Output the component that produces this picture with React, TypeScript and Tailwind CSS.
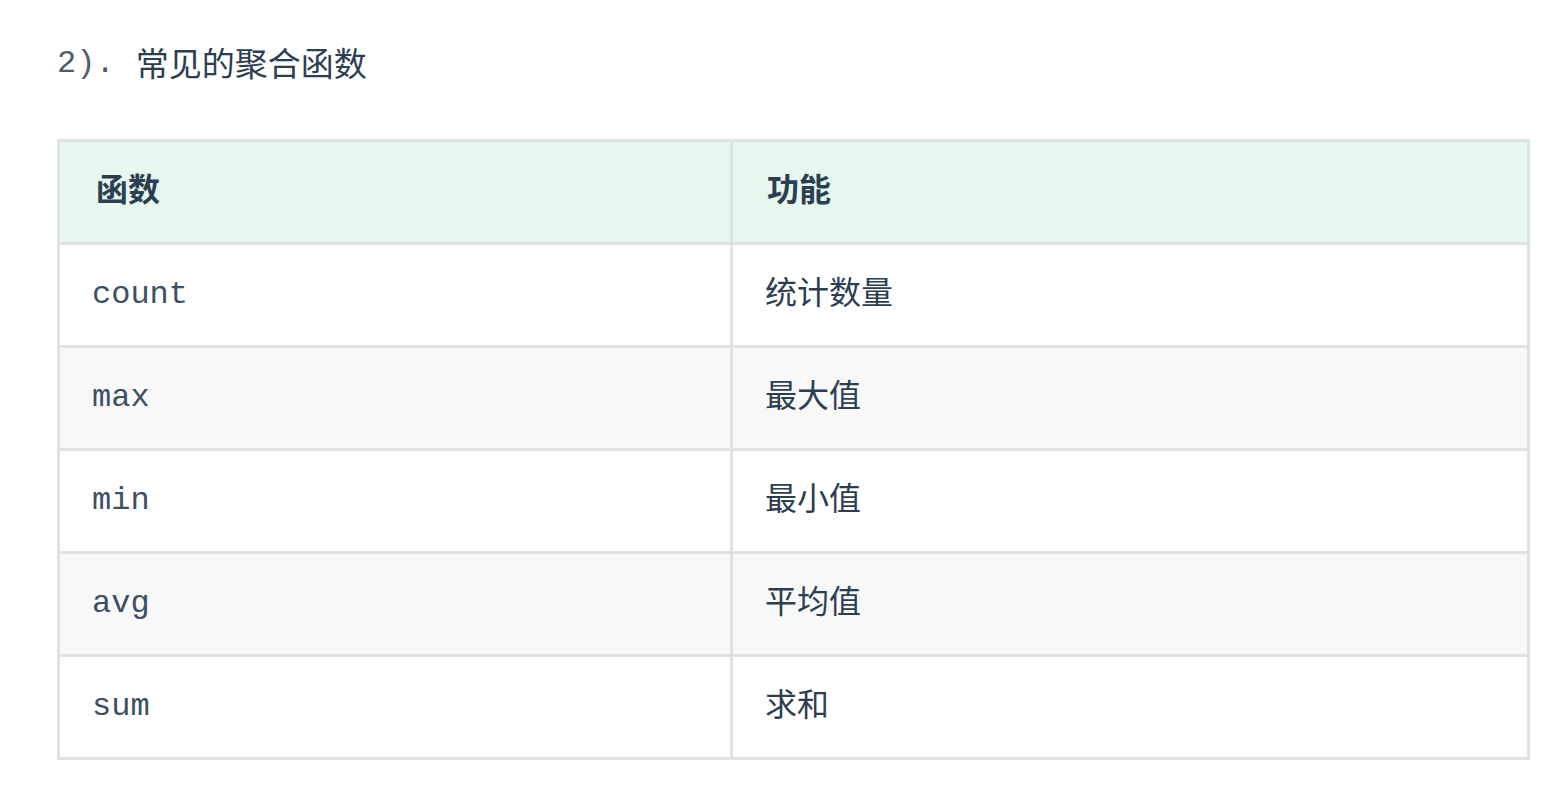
import React from "react";

const rows: [string, string][] = [
  ["count", "统计数量"],
  ["max", "最大值"],
  ["min", "最小值"],
  ["avg", "平均值"],
  ["sum", "求和"],
];

const cjk = "font-['Noto_Sans_CJK_SC','Noto_Sans',sans-serif]";
const mono = "font-['Liberation_Mono','Courier_New',monospace]";

export default function App() {
  return (
    <div className="w-[1560px] h-[807px] bg-white text-[#2c3e50] overflow-hidden">
      <div className="pl-[57px] pt-[41px]">
        <div className="flex items-center h-[46px] leading-none">
          <span className={`${mono} text-[32px] text-[#4f5b67] whitespace-pre`}>2). </span>
          <span className={`${cjk} text-[33px] ml-[2px] pb-[4px]`}>常见的聚合函数</span>
        </div>
        <div className="mt-[52px] w-[1473px] bg-[#dfe2e5] p-[3px] grid grid-cols-[670px_1fr] gap-[3px]">
          <div className={`bg-[#e6f7f0] h-[100px] flex items-center pl-[36px] pb-[10px] ${cjk} font-bold text-[32px]`}>函数</div>
          <div className={`bg-[#e6f7f0] h-[100px] flex items-center pl-[34px] pb-[10px] ${cjk} font-bold text-[32px]`}>功能</div>
          {rows.map(([f, d], i) => {
            const bg = i % 2 === 1 ? "bg-[#f8f8f8]" : "bg-white";
            return (
              <React.Fragment key={f}>
                <div className={`${bg} h-[100px] flex items-center pl-[32px] ${mono} text-[32px] text-[#3d4f61]`}>{f}</div>
                <div className={`${bg} h-[100px] flex items-center pl-[32px] pb-[10px] ${cjk} text-[32px]`}>{d}</div>
              </React.Fragment>
            );
          })}
        </div>
      </div>
    </div>
  );
}
